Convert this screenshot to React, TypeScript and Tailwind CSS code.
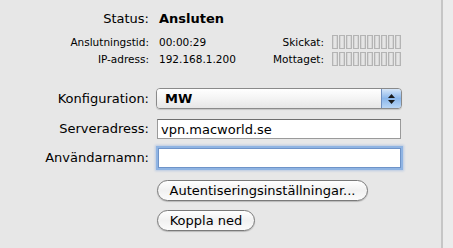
import React from "react";

const font = { fontFamily: '"DejaVu Sans", "Lucida Grande", Verdana, sans-serif' };

function Meter() {
  return (
    <div className="flex gap-px h-[14px]">
      {Array.from({ length: 10 }).map((_, i) => (
        <div
          key={i}
          className="w-[6px] h-[14px] border border-[#b4b4b4] bg-gradient-to-r from-[#cfcfcf] via-[#ededed] to-[#cfcfcf]"
        />
      ))}
    </div>
  );
}

export default function App() {
  return (
    <div className="w-[453px] h-[248px] flex bg-[#e7e7e7] text-black overflow-hidden" style={font}>
      <div className="w-[441px] h-full flex flex-col">
        {/* Status */}
        <div className="flex items-center h-[16px] mt-[11px] text-[13px] leading-[16px]">
          <div className="w-[149px] text-right">Status:</div>
          <div className="ml-[10px] font-bold">Ansluten</div>
        </div>
        {/* Anslutningstid */}
        <div className="flex items-center h-[17px] mt-[6px] text-[10.5px] leading-[14px]">
          <div className="w-[149px] text-right">Anslutningstid:</div>
          <div className="ml-[10px] w-[80px]">00:00:29</div>
          <div className="w-[85px] text-right">Skickat:</div>
          <div className="ml-[8px]">
            <Meter />
          </div>
        </div>
        {/* IP-adress */}
        <div className="flex items-center h-[17px] text-[10.5px] leading-[14px]">
          <div className="w-[149px] text-right">IP-adress:</div>
          <div className="ml-[10px] w-[80px]">192.168.1.200</div>
          <div className="w-[85px] text-right">Mottaget:</div>
          <div className="ml-[8px]">
            <Meter />
          </div>
        </div>

        {/* Konfiguration */}
        <div className="flex items-center h-[21px] mt-[21px] text-[13px]">
          <div className="w-[149px] text-right">Konfiguration:</div>
          <div className="ml-[7px] w-[246px] h-[21px] flex rounded-[4px] border border-[#8a8a8a] overflow-hidden shadow-[0_1px_1px_rgba(0,0,0,0.15)]">
            <div className="flex-1 flex items-center pl-[8px] bg-gradient-to-b from-[#ffffff] via-[#f4f4f4] to-[#e6e6e6] font-semibold">
              MW
            </div>
            <div className="w-[20px] flex flex-col items-center justify-center gap-[2px] border-l border-[#6f8fc0] bg-gradient-to-b from-[#d6e6f8] via-[#8ab6ea] to-[#b9d6f6]">
              <svg width="7" height="4" viewBox="0 0 7 4"><path d="M3.5 0 L7 4 L0 4 Z" fill="#1a1a1a" /></svg>
              <svg width="7" height="4" viewBox="0 0 7 4"><path d="M0 0 L7 0 L3.5 4 Z" fill="#1a1a1a" /></svg>
            </div>
          </div>
        </div>

        {/* Serveradress */}
        <div className="flex items-center h-[20px] mt-[10px] text-[13px]">
          <div className="w-[149px] text-right">Serveradress:</div>
          <div className="ml-[8px] w-[244px] h-[20px] bg-white border border-[#9a9a9a] border-t-[#6e6e6e] flex items-center pl-[3px] leading-none">
            vpn.macworld.se
          </div>
        </div>

        {/* Användarnamn */}
        <div className="flex items-center h-[20px] mt-[9px] text-[13px]">
          <div className="w-[149px] text-right">Användarnamn:</div>
          <div className="ml-[9px] w-[243px] h-[20px] bg-white border border-[#6e93c8] shadow-[0_0_0_2px_#8fb4e3,0_0_2px_3px_rgba(120,160,220,0.4)]" />
        </div>

        {/* Buttons */}
        <div className="ml-[157px] mt-[12px] flex flex-col gap-[9px] text-[13px]">
          <div className="w-[211px] h-[21px] rounded-full border border-[#7a7a7a] bg-gradient-to-b from-[#ffffff] via-[#f1f1f1] to-[#fbfbfb] flex items-center justify-center shadow-[0_1px_1px_rgba(0,0,0,0.2)]">
            Autentiseringsinställningar...
          </div>
          <div className="w-[98px] h-[21px] rounded-full border border-[#7a7a7a] bg-gradient-to-b from-[#ffffff] via-[#f1f1f1] to-[#fbfbfb] flex items-center justify-center shadow-[0_1px_1px_rgba(0,0,0,0.2)]">
            Koppla ned
          </div>
        </div>
      </div>
      <div className="w-[2px] h-full bg-[#c6c6c6]" />
      <div className="flex-1 h-full bg-[#ececec]" />
    </div>
  );
}
